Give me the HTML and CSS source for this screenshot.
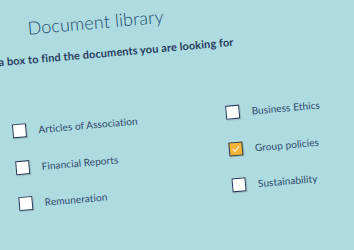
FILE: index.html
```html
<!DOCTYPE html>
<html lang="en">
  <head>
    <meta charset="UTF-8" />
    <meta name="viewport" content="width=device-width, initial-scale=1.0" />
    <title>Document library</title>
    <link rel="stylesheet" href="styles.css">
  </head>
  <body>
    <div class="page">
      <h1 class="title">Document library</h1>
      <p class="intro">a box to find the documents you are looking for</p>

      <div class="filters">
        <label class="option"><span class="box"></span>Articles of Association</label>
        <label class="option"><span class="box"></span>Financial Reports</label>
        <label class="option"><span class="box"></span>Remuneration</label>
        <label class="option"><span class="box"></span>Business Ethics</label>
        <label class="option">
          <span class="box checked">
            <svg viewBox="0 0 14 14" width="10" height="10"><path d="M2.5 7.2 L5.6 10 L11.5 3.8" fill="none" stroke="#fff" stroke-width="1.4" stroke-linecap="round" stroke-linejoin="round"/></svg>
          </span>Group policies</label>
        <label class="option"><span class="box"></span>Sustainability</label>
      </div>
    </div>
  </body>
</html>
```

FILE: styles.css
```css
body {
  margin: 0;
  height: 100vh;
  overflow: hidden;
  background-color: #addbe0;
  font-family: Lato, "Open Sans", sans-serif;
}
.page {
  transform: rotate(-5deg);
  transform-origin: 0 0;
  width: 380px;
}
.title {
  margin: 0;
  padding: 19px 0 0 25px;
  font-size: 18px;
  font-weight: 300;
  line-height: 23px;
  color: #1d4b6b;
  letter-spacing: 0.1px;
}
.intro {
  margin: 13px 0 0 -7px;
  font-size: 11px;
  font-weight: 700;
  line-height: 14px;
  color: #283d5c;
  letter-spacing: 0.1px;
}
.filters {
  display: grid;
  grid-template-columns: 214px 1fr;
  grid-template-rows: repeat(3, 14px);
  grid-auto-flow: column;
  row-gap: 22.6px;
  margin: 56px 0 0 1px;
}
.option {
  display: flex;
  align-items: center;
  gap: 12px;
  font-size: 10px;
  color: #2d4868;
  letter-spacing: 0.1px;
}
.box {
  width: 14px;
  height: 14px;
  box-sizing: border-box;
  border: 1.5px solid #1f3a58;
  background: #fff;
  box-shadow: 1px 1px 1px rgba(0, 0, 0, 0.15);
  display: flex;
  align-items: center;
  justify-content: center;
}
.box.checked {
  background: #f5b434;
}
```
